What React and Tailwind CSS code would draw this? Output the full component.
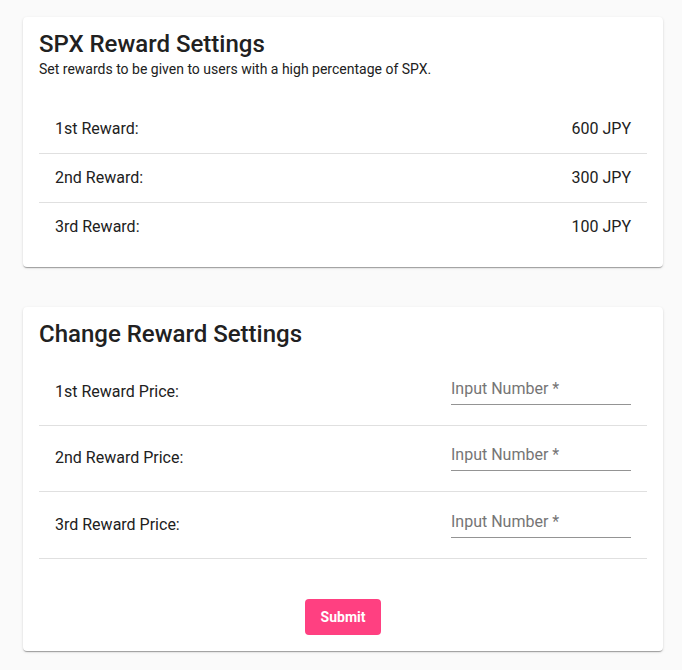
import React, { useState } from 'react'

const rewards = [
  { label: '1st Reward:', value: '600 JPY' },
  { label: '2nd Reward:', value: '300 JPY' },
  { label: '3rd Reward:', value: '100 JPY' },
]

const priceFields = ['1st Reward Price:', '2nd Reward Price:', '3rd Reward Price:']

function Card({ children }) {
  return (
    <div className="bg-white rounded-[4px] px-4 pt-3 pb-4 shadow-[0px_2px_1px_-1px_rgba(0,0,0,0.2),0px_1px_1px_0px_rgba(0,0,0,0.14),0px_1px_3px_0px_rgba(0,0,0,0.12)]">
      {children}
    </div>
  )
}

export default function App() {
  const [prices, setPrices] = useState(['', '', ''])

  const setPrice = (i, v) => {
    const next = [...prices]
    next[i] = v
    setPrices(next)
  }

  return (
    <div className="min-h-screen bg-[#fafafa] pt-[17px] pb-5 font-['Roboto',sans-serif] text-[#212121]">
      <div className="ml-[23px] w-[640px] flex flex-col gap-10">
        <Card>
          <h2 className="text-2xl leading-[30px] font-medium">SPX Reward Settings</h2>
          <p className="text-sm leading-5">Set rewards to be given to users with a high percentage of SPX.</p>
          <div className="mt-[26px]">
            {rewards.map((r, i) => (
              <div
                key={r.label}
                className={`flex items-center justify-between px-4 text-base leading-6 ${i < rewards.length - 1 ? 'h-[49px] border-b border-[#e0e0e0]' : 'h-12'}`}
              >
                <span>{r.label}</span>
                <span>{r.value}</span>
              </div>
            ))}
          </div>
        </Card>

        <Card>
          <h2 className="text-2xl leading-[30px] font-medium">Change Reward Settings</h2>
          <div className="mt-[10px]">
            {priceFields.map((label, i) => (
              <div key={label} className="flex items-center justify-between h-[66.5px] px-4 border-b border-[#e0e0e0]">
                <span className="text-base leading-6">{label}</span>
                <input
                  type="number"
                  value={prices[i]}
                  onChange={(e) => setPrice(i, e.target.value)}
                  placeholder="Input Number *"
                  className="w-[180px] mb-[2px] pb-[3px] text-base leading-6 bg-transparent outline-none border-b border-[#949494] placeholder:text-[#757575]"
                />
              </div>
            ))}
          </div>
          <div className="flex justify-center mt-10">
            <button className="h-9 px-4 rounded-[4px] bg-[#ff4081] text-white text-sm font-bold">
              Submit
            </button>
          </div>
        </Card>
      </div>
    </div>
  )
}
